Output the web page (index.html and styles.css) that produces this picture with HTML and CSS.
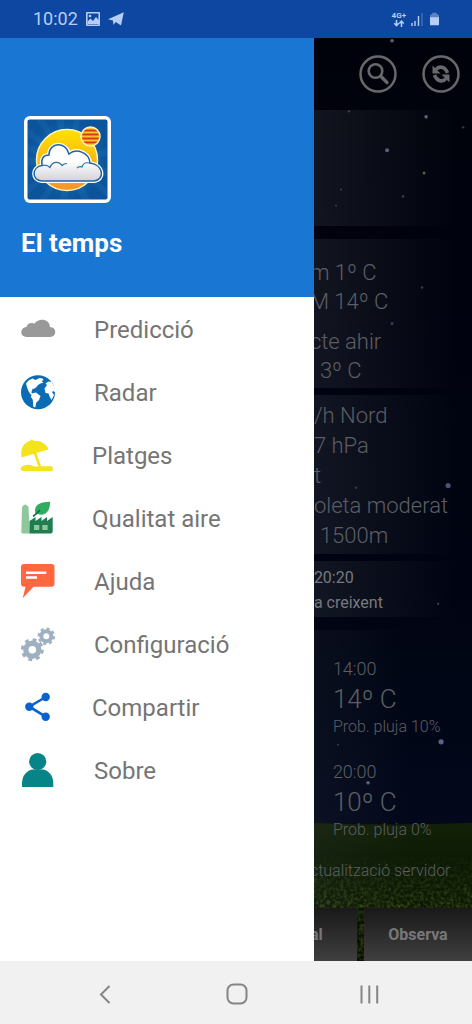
FILE: index.html
```html
<!DOCTYPE html>
<html lang="ca">
<head>
<meta charset="utf-8">
<meta name="viewport" content="width=device-width, initial-scale=1">
<title>El temps</title>
<link rel="stylesheet" href="styles.css">
</head>
<body>
<div class="screen">
  <header class="status">
    <span class="status-time">10:02</span>
    <svg class="status-picture" viewBox="0 0 14 14" aria-hidden="true"><path fill="currentColor" fill-rule="evenodd" d="M1 0h12a1 1 0 0 1 1 1v12a1 1 0 0 1-1 1H1a1 1 0 0 1-1-1V1a1 1 0 0 1 1-1zM1.600 1.600v10.800h10.800V1.600z"/><path fill="currentColor" d="M1.500 12V9.500l3-3 2.500 2.500 3-4 3 3.500V12z"/><circle cx="4" cy="4" r="1.300" fill="currentColor"/></svg>
    <svg class="status-plane" viewBox="0 0 16 14" aria-hidden="true"><path fill="currentColor" d="M0 7.200 15.800.3 13 13.500 7.800 10l-2.300 2.800-.6-4.200z"/></svg>
    <span class="status-spacer"></span>
    <span class="network">
      <span class="network-type">4G+</span>
      <svg class="network-arrows" viewBox="0 0 12 7" aria-hidden="true"><path fill="none" stroke="currentColor" stroke-width="1.500" d="M3.500 0v5.500M1.300 3.300l2.200 2.400 2.200-2.400M8.500 7V1.200M6.300 3.500l2.200-2.400 2.200 2.400"/></svg>
    </span>
    <svg class="status-signal" viewBox="0 0 12 14" aria-hidden="true"><path stroke="currentColor" stroke-width="1.400" d="M1 14v-3M4 14V9M7.500 14V4"/><path stroke="currentColor" stroke-width="1.400" opacity=".3" d="M11 14V1"/></svg>
    <svg class="status-battery" viewBox="0 0 10 14" aria-hidden="true"><path fill="currentColor" opacity=".45" d="M2.500 1.500V0h5v1.500L10 2.500V6H0V2.500z"/><path fill="currentColor" d="M0 5h10v8a1 1 0 0 1-1 1H1a1 1 0 0 1-1-1z"/></svg>
  </header>

  <div class="content">
    <aside class="drawer">
      <div class="drawer-head">
        <svg class="app-icon" viewBox="0 0 87 87" role="img" aria-label="El temps">
          <defs>
            <radialGradient id="sky"><stop offset="0" stop-color="#1c7fc4"/><stop offset="1" stop-color="#0b539a"/></radialGradient>
            <linearGradient id="sun" x2="0" y2="1"><stop offset="0" stop-color="#ffe100"/><stop offset="1" stop-color="#f6932a"/></linearGradient>
            <linearGradient id="puff" x2="0" y2="1"><stop offset=".45" stop-color="#fff"/><stop offset="1" stop-color="#d2d3da"/></linearGradient>
            <clipPath id="flag"><circle cx="66.500" cy="20.500" r="8.500"/></clipPath>
          </defs>
          <rect width="87" height="87" rx="6" fill="#fff"/>
          <rect x="3.500" y="3.500" width="80" height="80" rx="2" fill="url(#sky)"/>
          <path fill="#3ba0dc" opacity=".12" d="M43 44 4 12v9zM43 44 12 4h9zM43 44 32 4h8zM43 44 50 4h7zM43 44 83 32v8zM43 44 83 52v9zM43 44 83 72v9zM43 44 66 83h-9zM43 44 44 83h-8zM43 44 24 83h-9zM43 44 4 78v-9zM43 44 4 50v-9zM43 44 4 36v-8z"/>
          <circle cx="43" cy="44" r="30.500" fill="url(#sun)" stroke="#fff4b8" stroke-width="1.500"/>
          <path d="M18 65C7 64 8 51 18 49.500 17 43 19 39 25 39 25 26 42 25 45 38 52 32 65 36 66 47 80 49 81 64 70 65z" fill="#fff" stroke="#fff" stroke-width="4" stroke-linejoin="round"/>
          <path d="M18 65C7 64 8 51 18 49.500 17 43 19 39 25 39 25 26 42 25 45 38 52 32 65 36 66 47 80 49 81 64 70 65z" fill="url(#puff)" stroke="#20649a" stroke-width="1.500"/>
          <path d="M18 49.500c4-1 6 0 8 2 2-6 9-7 12-2 2-2 3-2 5-2M66 47c-5-1-7 0-8 4-2-1-4 0-5 1" fill="none" stroke="#2c70a5" stroke-width="1.200"/>
          <circle cx="66.500" cy="20.500" r="9.500" fill="#ffc52d" stroke="#fff0c2" stroke-width="1.500"/>
          <path clip-path="url(#flag)" stroke="#d43c19" stroke-width="2.200" d="M56 14.500h21M56 18.500h21M56 22.500h21M56 26.500h21"/>
        </svg>
        <h1 class="app-name">El temps</h1>
      </div>
      <nav class="menu">
        <a class="menu-item" href="#prediccio">
          <svg class="menu-icon" viewBox="0 0 35 35" aria-hidden="true"><path fill="#999" d="M5.500 25C-1.500 25-1.500 15.500 5.500 15 6 11.500 10 10 13.500 11.500 18 5.500 28.500 7 29 15c7 0 7 10 0 10z"/></svg>
          <span>Predicció</span></a>
        <a class="menu-item" href="#radar">
          <svg class="menu-icon" viewBox="0 0 35 35" aria-hidden="true"><circle cx="17" cy="17.200" r="17" fill="#0b6bb5"/><path fill="#fff" d="M5 8.500 7.500 5.500l4-2 3 1.500 4-2 3 .5 1 1.500-2 1 2 1.500-3 1-2.500 1.500-1.500 2-2 1.500-2 .5-1 3 .5 2 2.500 1-.5.800-3.500-1.500-2-3-1.500-4zM23.500 13.500 26 10l-1.500-1.500 3-2 3 .5 3 5 1 6-2-2-1.500 1 2 3-2.500 5-2-3.500-1-3-3-.5zM11.300 18.300l3.700-.8 4.500 3.500-1.500 4-2.700 2.500-1 5-2-.8-.5-7-2-3z"/></svg>
          <span>Radar</span></a>
        <a class="menu-item" href="#platges">
          <svg class="menu-icon menu-icon-narrow" viewBox="0 0 33 35" aria-hidden="true"><g fill="#f5e31b"><path d="M.5 19.500C-1 10 3 4.500 9.500 2.800l.5-1.300 2 .3.200 1C20 2.500 26 6 27.300 11.500z"/><path d="m12.300 14.500 2.500-.9L20 28h-2.700z"/><path d="M2 33q-3-1-2-3.500C3 26 9 26 12 28q2 1 5 .3h13.500q2 1 1 4.700z"/></g></svg>
          <span>Platges</span></a>
        <a class="menu-item" href="#qualitat">
          <svg class="menu-icon menu-icon-narrow" viewBox="0 0 33 35" aria-hidden="true"><path fill="#8fc79d" d="M1 6q3-5 6.500 0l1.300 26.500H2q-2 0-1.700-2z"/><path fill="#1f7d50" d="M8.500 20l6-4v4l6-4v4l5.500-4v4l5.700-4v14.500q0 2-2 2H8.500z"/><path fill="#8fc79d" d="M13 24h5.300v5H13zM21.300 24h5.300v5h-5.300z"/><path fill="#2fac60" d="M14.500 13C12 4 19 1 29 .8 29.500 10 24 16 16 12.800z"/><path fill="none" stroke="#146a43" stroke-width="1.600" stroke-linecap="round" d="M12.500 15q3-2 6-5.500"/></svg>
          <span>Qualitat aire</span></a>
        <a class="menu-item" href="#ajuda">
          <svg class="menu-icon" viewBox="0 0 35 35" aria-hidden="true"><path fill="#ff6740" d="M3 0h27.500q3 0 3 3v16.500q0 3.200-3 3.200h-18L1.700 34.300 4.500 22.700H3q-3 0-3-3.200V3q0-3 3-3z"/><path fill="#fff" d="M5 7.500h20.300v2.400H5zM5 12.300h11v2.400H5z"/></svg>
          <span>Ajuda</span></a>
        <a class="menu-item" href="#configuracio">
          <svg class="menu-icon" viewBox="0 0 35 35" aria-hidden="true"><g fill="none" stroke="#9fb0c0"><circle cx="11.300" cy="22.700" r="6.500" stroke-width="5.400"/><circle cx="11.300" cy="22.700" r="10" stroke-width="3" stroke-dasharray="3.900 3.954"/><circle cx="25.300" cy="9.300" r="5" stroke-width="4"/><circle cx="25.300" cy="9.300" r="7.600" stroke-width="2.400" stroke-dasharray="3 2.969"/></g></svg>
          <span>Configuració</span></a>
        <a class="menu-item" href="#compartir">
          <svg class="menu-icon menu-icon-narrow" viewBox="0 0 33 35" aria-hidden="true"><path fill="none" stroke="#0b62cf" stroke-width="2.600" d="M24.700 7 8.300 16.700l16.400 10"/><g fill="#0b62cf"><circle cx="24.700" cy="7" r="4.200"/><circle cx="8.300" cy="16.700" r="4.200"/><circle cx="24.700" cy="26.700" r="4.200"/></g></svg>
          <span>Compartir</span></a>
        <a class="menu-item" href="#sobre">
          <svg class="menu-icon" viewBox="0 0 35 35" aria-hidden="true"><g fill="#078487"><circle cx="16.700" cy="8.500" r="8.600"/><path d="M1 34v-4c0-8 6-13 10-13.500h11.500c4 .5 9.800 5.500 9.800 13.500v4z"/></g></svg>
          <span>Sobre</span></a>
      </nav>
    </aside>

    <main class="forecast">
      <svg class="scenery" viewBox="0 0 158 923" preserveAspectRatio="xMinYMax slice" aria-hidden="true">
        <defs>
          <linearGradient id="night" x2="0" y2="1"><stop offset="0" stop-color="#00020b"/><stop offset=".6" stop-color="#000412"/><stop offset="1" stop-color="#040b20"/></linearGradient>
          <linearGradient id="field" x2="0" y2="1"><stop offset="0" stop-color="#142108"/><stop offset=".3" stop-color="#0c1a05"/><stop offset=".6" stop-color="#0c1803"/><stop offset="1" stop-color="#050b02"/></linearGradient>
          <linearGradient id="near" x2="0" y2="1"><stop offset="0" stop-color="#000"/><stop offset=".5" stop-color="#ccc"/></linearGradient>
          <mask id="fade"><rect y="815" width="158" height="108" fill="url(#near)"/></mask>
          <filter id="blades" x="0" y="0" width="1" height="1"><feTurbulence type="fractalNoise" baseFrequency=".3" numOctaves="3" seed="4"/><feColorMatrix values="0 0 0 0 .1  0 0 0 0 .17  0 0 0 0 .02  1.500 0 0 0 -.55"/></filter>
        </defs>
        <rect width="158" height="923" fill="url(#night)"/>
        <path fill="url(#field)" d="M0 785q80 3 158 0v138H0z"/>
        <g mask="url(#fade)"><rect y="815" width="158" height="108" filter="url(#blades)"/></g>
        <g fill="#5a6178">
          <circle cx="78" cy="3.500" r="1.800"/><circle cx="112" cy="79.500" r="1.800"/><circle cx="73" cy="113" r="2"/>
          <circle cx="134" cy="448" r="2.600" fill="#4b5078"/><circle cx="127" cy="704" r="2.600" fill="#59638a"/><circle cx="54" cy="745" r="1.800"/>
        </g>
        <g fill="#33384a">
          <circle cx="110" cy="135.500" r="1.500" fill="#5c5a3e"/><circle cx="149" cy="90" r="1.200"/><circle cx="89" cy="159" r="1.300"/><circle cx="35" cy="74" r="1.200"/><circle cx="27" cy="152" r="1"/>
          <circle cx="78" cy="286" r="1.500"/><circle cx="108" cy="250" r="1.200"/><circle cx="42" cy="450" r="1.200"/><circle cx="124" cy="566" r="1.200"/><circle cx="24" cy="707" r="1"/><circle cx="22" cy="168" r="1"/>
        </g>
      </svg>
      <div class="toolbar">
        <button class="round" type="button" aria-label="Cerca"><svg viewBox="0 0 38 38" aria-hidden="true"><g fill="none" stroke="currentColor"><circle cx="19" cy="19" r="17.500" stroke-width="2.500"/><circle cx="16.500" cy="16" r="6.800" stroke-width="2.600"/><path stroke-width="3.400" stroke-linecap="round" d="m22 21.500 6 6"/></g></svg></button>
        <button class="round" type="button" aria-label="Actualitza"><svg viewBox="0 0 38 38" aria-hidden="true"><circle cx="19" cy="19" r="17.500" fill="none" stroke="currentColor" stroke-width="2.500"/><path fill="none" stroke="currentColor" stroke-width="3.600" d="M14 14.500c3-4 9-3 11.500 3.500M24 23.500c-3 4-9 3-11.500-3.500"/><path fill="currentColor" d="M10.500 10.500v8h8zM27.500 27.500v-8h-8z"/></svg></button>
      </div>
      <section class="card card-now"></section>
      <section class="card card-temps">
        <p>m 1º C</p><p>M 14º C</p>
        <p class="after-gap">cte ahir</p><p class="inset">3º C</p>
      </section>
      <section class="card card-wind">
        <p>/h Nord</p><p>7 hPa</p><p>t</p><p>oleta moderat</p><p class="inset">1500m</p>
      </section>
      <section class="card card-moon"><p>20:20</p><p>a creixent</p></section>
      <section class="card card-hours">
        <div class="hour"><p class="hour-time">14:00</p><p class="hour-temp">14º C</p><p class="hour-rain">Prob. pluja 10%</p></div>
        <div class="hour"><p class="hour-time">20:00</p><p class="hour-temp">10º C</p><p class="hour-rain">Prob. pluja 0%</p></div>
        <p class="updated">ctualització servidor</p>
      </section>
      <div class="tabs">
        <button class="tab tab-cut" type="button">al</button>
        <button class="tab tab-full" type="button">Observa</button>
      </div>
    </main>
  </div>

  <footer class="system-nav">
    <button type="button" aria-label="Enrere"><svg viewBox="0 0 24 24" aria-hidden="true"><path d="M16.500 4 8 12.500l8.500 8.500"/></svg></button>
    <button type="button" aria-label="Inici"><svg viewBox="0 0 24 24" aria-hidden="true"><rect x="2.500" y="2.500" width="19" height="19" rx="6"/></svg></button>
    <button type="button" aria-label="Recents"><svg viewBox="0 0 24 24" aria-hidden="true"><path d="M4.500 3.500v18M12.300 3.500v18M20.200 3.500v18"/></svg></button>
  </footer>
</div>
</body>
</html>
```

FILE: styles.css
```css
* { box-sizing: border-box; }
body { margin: 0; font-family: Roboto, "Noto Sans", sans-serif; }
h1, p { margin: 0; }
button { margin: 0; padding: 0; border: 0; background: none; font: inherit; color: inherit; }
svg { display: block; flex: none; }

.screen { display: flex; flex-direction: column; min-height: 100vh; }

.status { display: flex; flex: none; align-items: center; height: 38px; padding: 0 33px; background: #0d47a1; color: #b7cdf3; }
.status-time { margin-right: 8px; font-size: 18px; line-height: 24px; }
.status-picture { width: 14px; height: 14px; margin-right: 8px; }
.status-plane { width: 16px; height: 14px; }
.status-spacer { flex: 1; }
.network { display: flex; flex-direction: column; align-items: center; margin-right: 5px; }
.network-type { font-size: 8px; font-weight: 700; line-height: 8px; }
.network-arrows { width: 12px; height: 7px; }
.status-signal { width: 12px; height: 14px; margin-right: 7px; }
.status-battery { width: 9px; height: 14px; }

.content { display: flex; flex: 1; }

.drawer { width: 66.5%; background: #fff; }
.drawer-head { padding: 78px 21px 38px; background: #1976d2; }
.app-icon { width: 87px; height: 87px; margin: 0 3px 24px; }
.app-name { color: #fff; font-size: 26px; font-weight: 700; line-height: 32px; }
.menu { padding-top: 1px; }
.menu-item { display: flex; align-items: center; gap: 38px; height: 63px; padding-left: 21px; color: #757575; font-size: 24px; line-height: 32px; text-decoration: none; }
.menu-icon { width: 35px; height: 35px; overflow: visible; }
.menu-icon-narrow { width: 33px; }

.forecast { position: relative; display: flex; flex: 1; flex-direction: column; min-width: 0; overflow: hidden; white-space: nowrap; background: #00030e; color: #5c5e64; font-weight: 300; }
.scenery { position: absolute; inset: 0; width: 100%; height: 100%; }
.toolbar, .card, .tabs { position: relative; }
.toolbar { display: flex; align-items: center; justify-content: flex-end; gap: 25px; height: 72px; padding-right: 12px; color: #68686b; }
.round, .round svg { width: 38px; height: 38px; }
.card { background: linear-gradient(90deg, rgba(90, 95, 105, .2), rgba(90, 95, 105, 0) 90%); font-size: 22px; }
.card-now { height: 116px; margin-bottom: 13px; }
.card-temps { margin-bottom: 7px; padding: 19px 0 3px; line-height: 29px; text-indent: -4px; }
.after-gap { margin-top: 11px; }
.inset { padding-left: 6px; }
.card-temps .inset { padding-left: 10px; }
.card-wind { margin-bottom: 7px; padding: 6px 0 3px; line-height: 30px; }
.card-moon { margin-bottom: 13px; padding: 4px 0 2px; color: #77797d; font-size: 16px; font-weight: 400; line-height: 25px; }
.card-hours { flex: 1; padding: 26px 0 14px; background: linear-gradient(90deg, rgba(90, 95, 105, .1), rgba(90, 95, 105, 0) 60%); }
.hour { margin-bottom: 21px; padding-left: 19px; }
.hour + .updated { margin-top: -2px; }
.hour-time { font-size: 18px; line-height: 26px; }
.hour-temp { font-size: 26px; line-height: 34px; }
.hour-rain { font-size: 16px; line-height: 22px; }
.updated { font-size: 16px; line-height: 22px; text-indent: -4px; }
.tabs { display: flex; gap: 7px; }
.tab { height: 53px; background: linear-gradient(#1a1919, #403f3f); color: #77777a; font-size: 16px; font-weight: 700; }
.tab-cut { flex: 43; text-align: left; text-indent: -4px; }
.tab-full { flex: 108; }

.system-nav { display: flex; flex: none; height: 63px; padding: 2px 37px 0 39px; background: #f1f1f1; }
.system-nav button { display: flex; flex: 1; align-items: center; justify-content: center; }
.system-nav svg { width: 24px; height: 24px; fill: none; stroke: #858585; stroke-width: 2; }
```
